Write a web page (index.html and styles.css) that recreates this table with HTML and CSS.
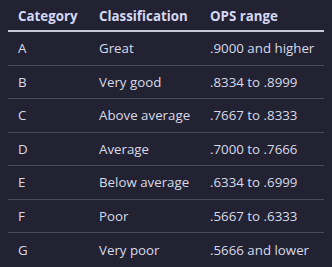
FILE: index.html
```html
<!DOCTYPE html>
<html>
<head>
<meta charset="utf-8">
<link rel="stylesheet" href="styles.css">
</head>
<body>
<div class="ops">
  <div class="row head"><span>Category</span><span>Classification</span><span>OPS range</span></div>
  <div class="row"><span>A</span><span>Great</span><span>.9000 and higher</span></div>
  <div class="row"><span>B</span><span>Very good</span><span>.8334 to .8999</span></div>
  <div class="row"><span>C</span><span>Above average</span><span>.7667 to .8333</span></div>
  <div class="row"><span>D</span><span>Average</span><span>.7000 to .7666</span></div>
  <div class="row"><span>E</span><span>Below average</span><span>.6334 to .6999</span></div>
  <div class="row"><span>F</span><span>Poor</span><span>.5667 to .6333</span></div>
  <div class="row last"><span>G</span><span>Very poor</span><span>.5666 and lower</span></div>
</div>
</body>
</html>
```

FILE: styles.css
```css
html, body {
  margin: 0;
  background: #222233;
}
body {
  padding: 0 8px;
  font-family: "Open Sans", "Noto Sans", sans-serif;
  font-size: 13.3px;
  color: #d8dae8;
}
.ops {
  width: 316px;
  display: flex;
  flex-direction: column;
}
.row {
  display: grid;
  grid-template-columns: 81px 111px 1fr;
  align-items: center;
  height: 33.5px;
  box-sizing: border-box;
  padding-left: 10px;
  border-bottom: 1px solid #4a4a5c;
  white-space: nowrap;
}
.row.head {
  height: 32px;
  padding-top: 2px;
  font-weight: 700;
  color: #d4d8f4;
  border-bottom: 2px solid #c8c8d6;
}
.row.last {
  border-bottom: none;
}
```
